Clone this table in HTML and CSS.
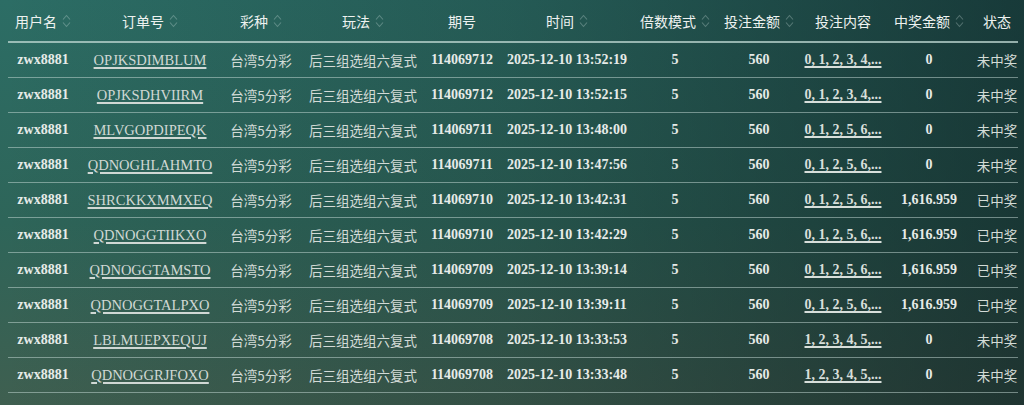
FILE: index.html
```html
<!DOCTYPE html>
<html lang="zh-CN">
<head>
<meta charset="utf-8">
<title>投注记录</title>
<link rel="stylesheet" href="styles.css">
</head>
<body>
<table class="records">
  <colgroup>
    <col class="c-user"><col class="c-order"><col class="c-lot"><col class="c-play"><col class="c-issue"><col class="c-time"><col class="c-mult"><col class="c-amt"><col class="c-content"><col class="c-win"><col class="c-state">
  </colgroup>
  <thead>
    <tr>
      <th><span class="h">用户名<svg class="sort" viewBox="0 0 9 16"><path d="M1 6.5 4.5 2.5 8 6.5M1 9.5 4.5 13.5 8 9.5"/></svg></span></th>
      <th><span class="h">订单号<svg class="sort" viewBox="0 0 9 16"><path d="M1 6.5 4.5 2.5 8 6.5M1 9.5 4.5 13.5 8 9.5"/></svg></span></th>
      <th><span class="h">彩种<svg class="sort" viewBox="0 0 9 16"><path d="M1 6.5 4.5 2.5 8 6.5M1 9.5 4.5 13.5 8 9.5"/></svg></span></th>
      <th><span class="h">玩法<svg class="sort" viewBox="0 0 9 16"><path d="M1 6.5 4.5 2.5 8 6.5M1 9.5 4.5 13.5 8 9.5"/></svg></span></th>
      <th><span class="h">期号</span></th>
      <th><span class="h">时间<svg class="sort" viewBox="0 0 9 16"><path d="M1 6.5 4.5 2.5 8 6.5M1 9.5 4.5 13.5 8 9.5"/></svg></span></th>
      <th><span class="h">倍数模式<svg class="sort" viewBox="0 0 9 16"><path d="M1 6.5 4.5 2.5 8 6.5M1 9.5 4.5 13.5 8 9.5"/></svg></span></th>
      <th><span class="h">投注金额<svg class="sort" viewBox="0 0 9 16"><path d="M1 6.5 4.5 2.5 8 6.5M1 9.5 4.5 13.5 8 9.5"/></svg></span></th>
      <th><span class="h">投注内容</span></th>
      <th><span class="h">中奖金额<svg class="sort" viewBox="0 0 9 16"><path d="M1 6.5 4.5 2.5 8 6.5M1 9.5 4.5 13.5 8 9.5"/></svg></span></th>
      <th><span class="h">状态</span></th>
    </tr>
  </thead>
  <tbody>
    <tr><td class="num">zwx8881</td><td><a class="link">OPJKSDIMBLUM</a></td><td class="cn">台湾5分彩</td><td class="cn">后三组选组六复式</td><td class="num">114069712</td><td class="num">2025-12-10 13:52:19</td><td class="num">5</td><td class="num">560</td><td><a class="link num">0, 1, 2, 3, 4,...</a></td><td class="num">0</td><td class="cn">未中奖</td></tr>
    <tr><td class="num">zwx8881</td><td><a class="link">OPJKSDHVIIRM</a></td><td class="cn">台湾5分彩</td><td class="cn">后三组选组六复式</td><td class="num">114069712</td><td class="num">2025-12-10 13:52:15</td><td class="num">5</td><td class="num">560</td><td><a class="link num">0, 1, 2, 3, 4,...</a></td><td class="num">0</td><td class="cn">未中奖</td></tr>
    <tr><td class="num">zwx8881</td><td><a class="link">MLVGOPDIPEQK</a></td><td class="cn">台湾5分彩</td><td class="cn">后三组选组六复式</td><td class="num">114069711</td><td class="num">2025-12-10 13:48:00</td><td class="num">5</td><td class="num">560</td><td><a class="link num">0, 1, 2, 5, 6,...</a></td><td class="num">0</td><td class="cn">未中奖</td></tr>
    <tr><td class="num">zwx8881</td><td><a class="link">QDNOGHLAHMTO</a></td><td class="cn">台湾5分彩</td><td class="cn">后三组选组六复式</td><td class="num">114069711</td><td class="num">2025-12-10 13:47:56</td><td class="num">5</td><td class="num">560</td><td><a class="link num">0, 1, 2, 5, 6,...</a></td><td class="num">0</td><td class="cn">未中奖</td></tr>
    <tr><td class="num">zwx8881</td><td><a class="link">SHRCKKXMMXEQ</a></td><td class="cn">台湾5分彩</td><td class="cn">后三组选组六复式</td><td class="num">114069710</td><td class="num">2025-12-10 13:42:31</td><td class="num">5</td><td class="num">560</td><td><a class="link num">0, 1, 2, 5, 6,...</a></td><td class="num">1,616.959</td><td class="cn">已中奖</td></tr>
    <tr><td class="num">zwx8881</td><td><a class="link">QDNOGGTIIKXO</a></td><td class="cn">台湾5分彩</td><td class="cn">后三组选组六复式</td><td class="num">114069710</td><td class="num">2025-12-10 13:42:29</td><td class="num">5</td><td class="num">560</td><td><a class="link num">0, 1, 2, 5, 6,...</a></td><td class="num">1,616.959</td><td class="cn">已中奖</td></tr>
    <tr><td class="num">zwx8881</td><td><a class="link">QDNOGGTAMSTO</a></td><td class="cn">台湾5分彩</td><td class="cn">后三组选组六复式</td><td class="num">114069709</td><td class="num">2025-12-10 13:39:14</td><td class="num">5</td><td class="num">560</td><td><a class="link num">0, 1, 2, 5, 6,...</a></td><td class="num">1,616.959</td><td class="cn">已中奖</td></tr>
    <tr><td class="num">zwx8881</td><td><a class="link">QDNOGGTALPXO</a></td><td class="cn">台湾5分彩</td><td class="cn">后三组选组六复式</td><td class="num">114069709</td><td class="num">2025-12-10 13:39:11</td><td class="num">5</td><td class="num">560</td><td><a class="link num">0, 1, 2, 5, 6,...</a></td><td class="num">1,616.959</td><td class="cn">已中奖</td></tr>
    <tr><td class="num">zwx8881</td><td><a class="link">LBLMUEPXEQUJ</a></td><td class="cn">台湾5分彩</td><td class="cn">后三组选组六复式</td><td class="num">114069708</td><td class="num">2025-12-10 13:33:53</td><td class="num">5</td><td class="num">560</td><td><a class="link num">1, 2, 3, 4, 5,...</a></td><td class="num">0</td><td class="cn">未中奖</td></tr>
    <tr><td class="num">zwx8881</td><td><a class="link">QDNOGGRJFOXO</a></td><td class="cn">台湾5分彩</td><td class="cn">后三组选组六复式</td><td class="num">114069708</td><td class="num">2025-12-10 13:33:48</td><td class="num">5</td><td class="num">560</td><td><a class="link num">1, 2, 3, 4, 5,...</a></td><td class="num">0</td><td class="cn">未中奖</td></tr>
  </tbody>
</table>
</body>
</html>
```

FILE: styles.css
```css
html, body {
  margin: 0;
  height: 100%;
}
body {
  background:
    linear-gradient(to right, rgba(10, 24, 28, 0) 0%, rgba(10, 24, 28, 0.22) 50%, rgba(10, 24, 28, 0.6) 100%),
    linear-gradient(to bottom, #2c6d65 0%, #2e6559 55%, #3f5f50 100%);
  font-family: "Liberation Serif", "Noto Sans CJK SC", serif;
  color: #e9eeeb;
  overflow: hidden;
}
.records {
  margin-left: 8px;
  width: 1010px;
  table-layout: fixed;
  border-collapse: collapse;
}
.c-user { width: 70px; }
.c-order { width: 144px; }
.c-lot { width: 78px; }
.c-play { width: 126px; }
.c-issue { width: 72px; }
.c-time { width: 138px; }
.c-mult { width: 78px; }
.c-amt { width: 90px; }
.c-content { width: 78px; }
.c-win { width: 94px; }
.c-state { width: 42px; }

th {
  height: 41px;
  padding: 0;
  font-family: "Noto Sans CJK SC", sans-serif;
  font-weight: 400;
  font-size: 14px;
  color: #eef2f0;
  text-align: center;
  white-space: nowrap;
  border-bottom: 2px solid rgba(190, 215, 210, 0.75);
}
.h {
  display: inline-flex;
  align-items: center;
  gap: 5px;
}
.sort {
  width: 9px;
  height: 16px;
  fill: none;
  stroke: rgba(220, 235, 232, 0.3);
  stroke-width: 1.1;
}
td {
  height: 34px;
  padding: 0;
  text-align: center;
  white-space: nowrap;
  overflow: visible;
  border-bottom: 1px solid rgba(200, 220, 215, 0.5);
  font-size: 14px;
}
.num {
  font-family: "Liberation Serif", serif;
  font-weight: 700;
  color: #e6ebe8;
}
.cn {
  font-family: "Noto Sans CJK SC", sans-serif;
  font-size: 13.5px;
  color: #d3dbd7;
}
.link {
  font-family: "Liberation Serif", serif;
  font-size: 14.5px;
  color: #d0d8d4;
  text-decoration: underline;
  text-decoration-thickness: 1.5px;
  text-underline-offset: 2px;
  cursor: pointer;
}
.link.num {
  font-size: 14px;
  color: #d8dfdb;
}
```
